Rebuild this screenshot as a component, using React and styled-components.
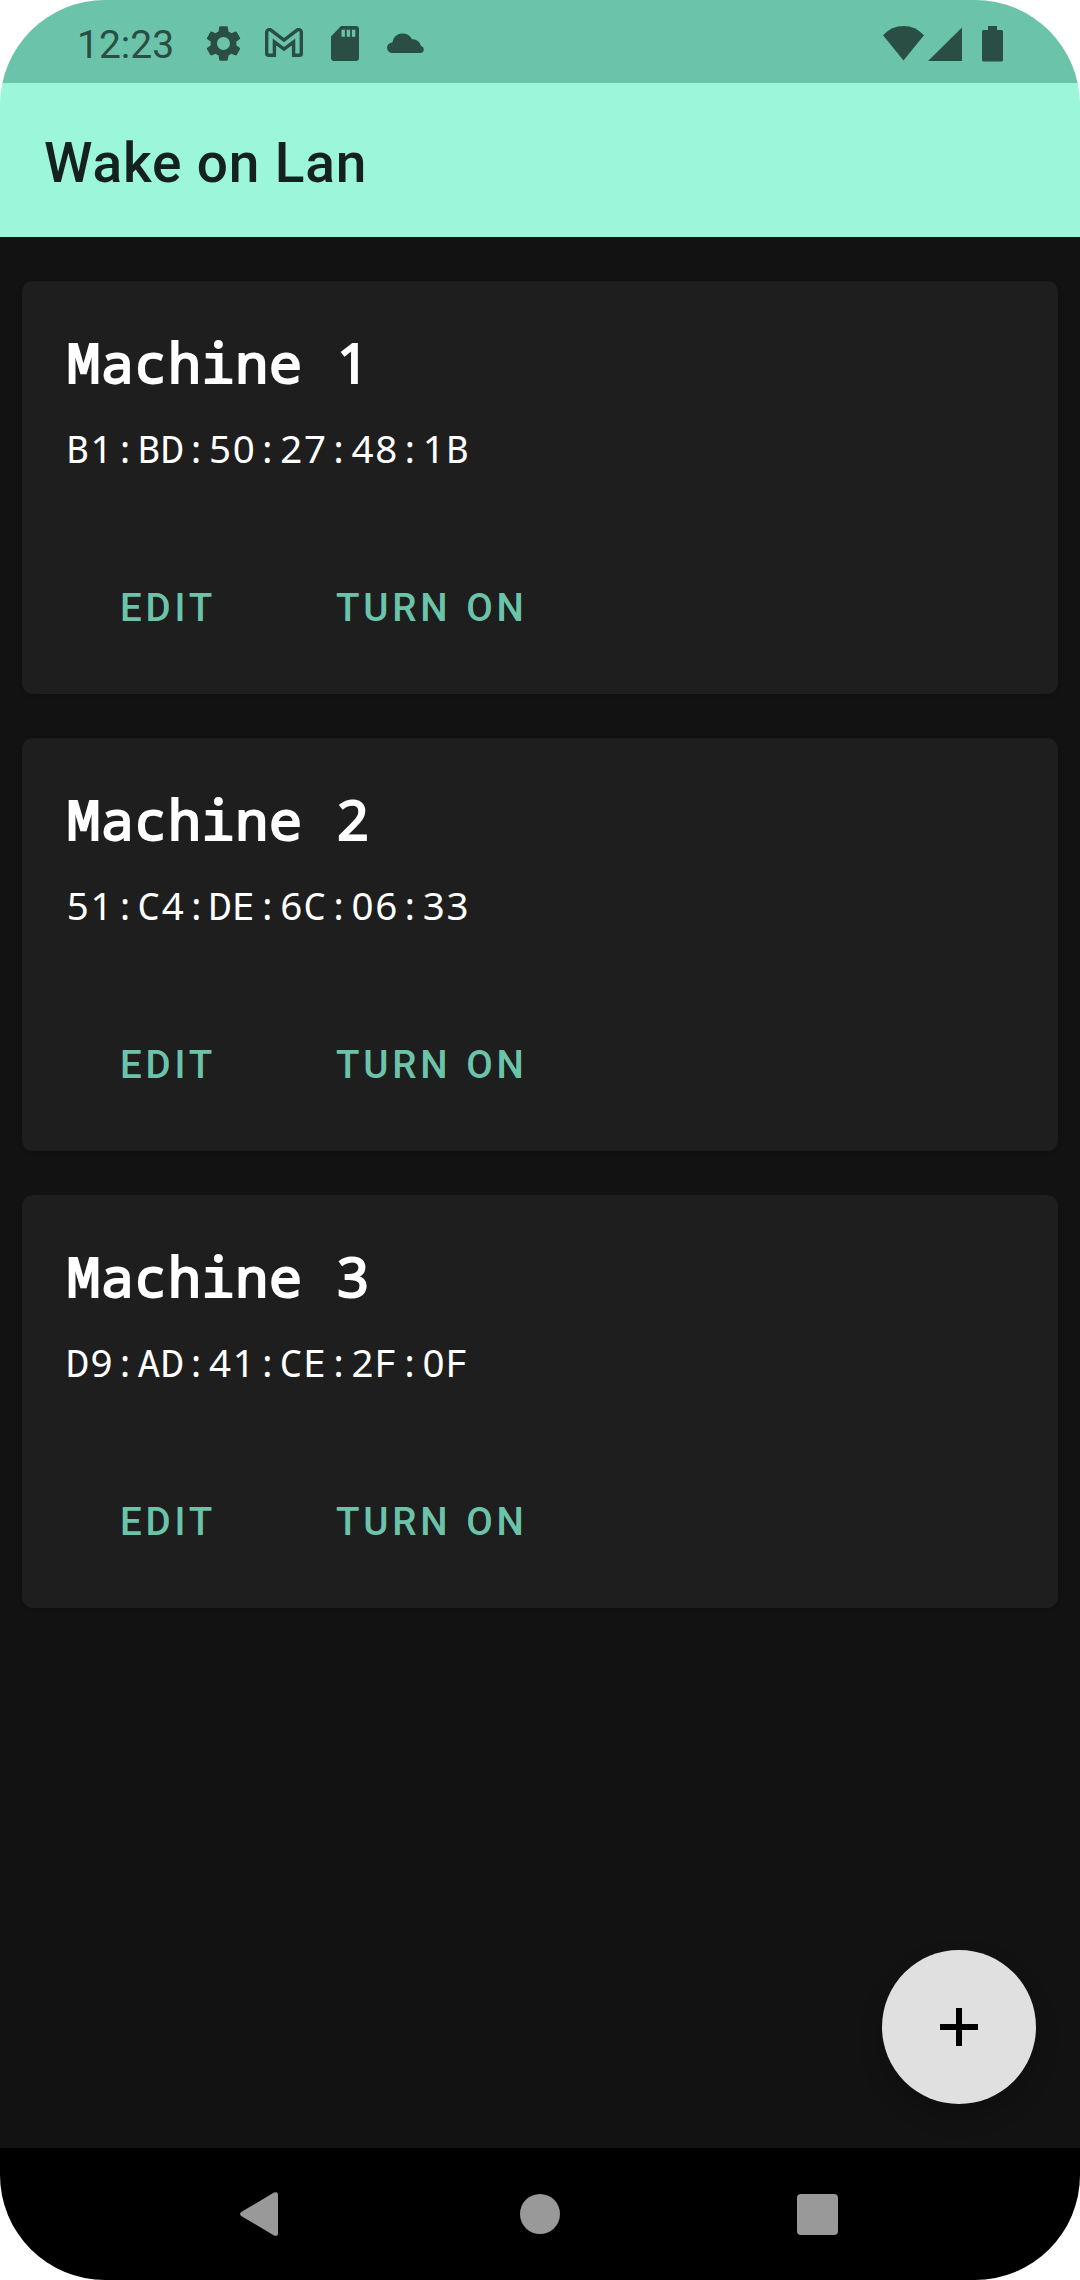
import React from "react";
import styled, { createGlobalStyle } from "styled-components";

const GlobalStyle = createGlobalStyle`
  body {
    margin: 0;
    background: #fff;
    font-family: Roboto, "Noto Sans", sans-serif;
  }
`;

const Screen = styled.div`
  width: 1080px;
  height: 2280px;
  display: flex;
  flex-direction: column;
  overflow: hidden;
  border-radius: 105px;
`;

const StatusBar = styled.header`
  height: 83px;
  flex: none;
  display: flex;
  align-items: center;
  justify-content: space-between;
  box-sizing: border-box;
  padding: 4px 77px 0 77px;
  background: #6bc4aa;
  color: #2a4e44;
`;

const StatusGroup = styled.div`
  display: flex;
  align-items: center;
  gap: ${(p) => p.$gap || 0}px;
`;

const Clock = styled.span`
  font-size: 39px;
  line-height: 46px;
  padding-top: 2px;
  margin-right: 27.5px;
`;

const Icon = styled.svg`
  display: block;
  flex: none;
  fill: currentColor;
`;

const AppBar = styled.div`
  height: 154px;
  flex: none;
  display: flex;
  align-items: center;
  box-sizing: border-box;
  padding: 6px 0 0 44px;
  background: #9bf6da;
`;

const AppTitle = styled.h1`
  margin: 0;
  font-size: 55px;
  line-height: 64px;
  font-weight: 500;
  letter-spacing: 0.85px;
  color: #15211e;
`;

const Content = styled.main`
  flex: 1;
  min-height: 0;
  position: relative;
  display: flex;
  flex-direction: column;
  gap: 44px;
  padding: 44px 22px 0;
  background: #121212;
`;

const Card = styled.article`
  height: 413px;
  box-sizing: border-box;
  padding: 44px;
  border-radius: 11px;
  background: #1e1e1e;
  box-shadow: 0 2px 4px rgba(0, 0, 0, 0.12);
  color: #fff;
`;

const MachineName = styled.h2`
  margin: 0;
  padding-left: 1px;
  font-family: "Noto Sans Mono", "DejaVu Sans Mono", monospace;
  font-size: 55px;
  line-height: 74px;
  font-weight: 400;
  letter-spacing: 0.65px;
  -webkit-text-stroke: 2px #fff;
`;

const MacAddress = styled.p`
  margin: 23px 0 0;
  font-family: "Noto Sans Mono", "DejaVu Sans Mono", monospace;
  font-size: 38.5px;
  line-height: 52px;
  letter-spacing: 0.6px;
`;

/* Plain digits, padded out to the 0.6em advance of the monospace face. */
const Digits = styled.span`
  font-family: "Noto Sans", sans-serif;
  letter-spacing: calc(0.028em + 0.65px);
  margin: 0 -0.02em 0 0.02em;
`;

const Actions = styled.div`
  display: flex;
  margin-top: 67px;
`;

const TextButton = styled.button`
  height: 132px;
  padding: 0 ${(p) => p.$right}px 0 ${(p) => p.$left}px;
  border: 0;
  background: none;
  font-family: Roboto, "Noto Sans", sans-serif;
  font-size: 38.5px;
  font-weight: 500;
  letter-spacing: 3.8px;
  word-spacing: 1.5px;
  color: #6bc4aa;
`;

const Fab = styled.button`
  position: absolute;
  right: 44px;
  bottom: 44px;
  width: 154px;
  height: 154px;
  padding: 0;
  border: 0;
  border-radius: 50%;
  display: grid;
  place-items: center;
  background: #e0e0e0;
  color: #000;
  box-shadow: 0 12px 24px rgba(0, 0, 0, 0.2);
`;

const NavBar = styled.nav`
  height: 132px;
  flex: none;
  display: flex;
  align-items: center;
  gap: 237px;
  box-sizing: border-box;
  padding-left: 240px;
  background: #000;
  color: #999;
`;

const machines = [
  { name: "Machine 1", mac: "B1:BD:50:27:48:1B" },
  { name: "Machine 2", mac: "51:C4:DE:6C:06:33" },
  { name: "Machine 3", mac: "D9:AD:41:CE:2F:0F" },
];

const MonoText = ({ children }) =>
  children
    .split(/(\d+)/)
    .filter(Boolean)
    .map((part, i) => (/^\d/.test(part) ? <Digits key={i}>{part}</Digits> : part));

const MachineCard = ({ name, mac }) => (
  <Card>
    <MachineName>
      <MonoText>{name}</MonoText>
    </MachineName>
    <MacAddress>
      <MonoText>{mac}</MonoText>
    </MacAddress>
    <Actions>
      <TextButton $left={54} $right={60}>EDIT</TextButton>
      <TextButton $left={60} $right={59}>TURN ON</TextButton>
    </Actions>
  </Card>
);

export default function App() {
  return (
    <>
      <GlobalStyle />
      <Screen>
        <StatusBar>
          <StatusGroup>
            <Clock>12:23</Clock>
            <StatusGroup $gap={28}>
              <StatusGroup $gap={20.5}>
                <Icon width="43" height="43" viewBox="0 0 24 24">
                  <path d="M19.14 12.94c.04-.3.06-.61.06-.94 0-.32-.02-.64-.07-.94l2.03-1.58a.49.49 0 0 0 .12-.61l-1.92-3.32a.488.488 0 0 0-.59-.22l-2.39.96c-.5-.38-1.03-.7-1.62-.94l-.36-2.54a.484.484 0 0 0-.48-.41h-3.84c-.24 0-.43.17-.47.41l-.36 2.54c-.59.24-1.13.57-1.62.94l-2.39-.96c-.22-.08-.47 0-.59.22L2.74 8.87c-.12.21-.08.47.12.61l2.03 1.58c-.05.3-.09.63-.09.94s.02.64.07.94l-2.03 1.58a.49.49 0 0 0-.12.61l1.92 3.32c.12.22.37.29.59.22l2.39-.96c.5.38 1.03.7 1.62.94l.36 2.54c.05.24.24.41.48.41h3.84c.24 0 .44-.17.47-.41l.36-2.54c.59-.24 1.13-.56 1.62-.94l2.39.96c.22.08.47 0 .59-.22l1.92-3.32c.12-.22.07-.47-.12-.61l-2.01-1.58zM12 15.6c-1.98 0-3.6-1.62-3.6-3.6s1.62-3.6 3.6-3.6 3.6 1.62 3.6 3.6-1.62 3.6-3.6 3.6z" />
                </Icon>
                <Icon width="38" height="31" viewBox="0 0 38 31">
                  <path
                    d="M1.700 25.500V4.600C1.700 1.600 4.500.8 6.300 2.300L19 12 31.700 2.300c1.800-1.500 4.600-.7 4.600 2.300V25.500q0 1.800-1.800 1.800H28.600V14L19 21.200 9.400 14V27.300H3.500Q1.700 27.300 1.700 25.500z"
                    fill="none"
                    stroke="currentColor"
                    strokeWidth="3.400"
                  />
                </Icon>
              </StatusGroup>
              <Icon width="28" height="35" viewBox="0 0 28 35">
                <path
                  fillRule="evenodd"
                  d="M10 0h15q3 0 3 3v29q0 3-3 3H3q-3 0-3-3V10.500zM10.500 3.700v7h3.400V3.700zM15.700 3.700v7h3.400V3.700zM20.900 3.700v7h3.400V3.700z"
                />
              </Icon>
              <Icon width="38" height="24" viewBox="0 0 38 24">
                <path d="M5.300 21A5.200 5.200 0 0 1 5.300 10.500 10.400 10.400 0 0 1 25 7.300 8.300 8.300 0 0 1 34 14 3.600 3.600 0 0 1 34 21z" />
              </Icon>
            </StatusGroup>
          </StatusGroup>
          <StatusGroup $gap={20}>
            <StatusGroup $gap={3.5}>
              <Icon width="41" height="36" viewBox="0 0 41 36">
                <path d="M0 9.300Q8.500 0 20.500 0T41 9.300L20.500 34.500z" />
              </Icon>
              <Icon width="34.500" height="34" viewBox="0 0 34.500 34">
                <path d="M0 34L34.500 0V34z" />
              </Icon>
            </StatusGroup>
            <Icon width="21" height="36" viewBox="0 0 21 36">
              <path d="M6 0h9v4h4.500Q21 4 21 5.500v28.500q0 1.500-1.500 1.500h-18Q0 35.500 0 34v-28.500Q0 4 1.500 4H6z" />
            </Icon>
          </StatusGroup>
        </StatusBar>
        <AppBar>
          <AppTitle>Wake on Lan</AppTitle>
        </AppBar>
        <Content>
          {machines.map((m) => (
            <MachineCard key={m.mac} {...m} />
          ))}
          <Fab aria-label="Add machine">
            <Icon width="38" height="38" viewBox="0 0 38 38">
              <path d="M16 0h6v16h16v6H22v16h-6V22H0v-6h16z" />
            </Icon>
          </Fab>
        </Content>
        <NavBar>
          <Icon width="43" height="44" viewBox="0 0 43 44">
            <path d="M1.200 20L34 .6Q38 -1 38 3V41Q38 45 34 43.400L1.200 24Q-1 22 1.200 20z" />
          </Icon>
          <Icon width="40" height="40" viewBox="0 0 40 40">
            <circle cx="20" cy="20" r="20" />
          </Icon>
          <Icon width="41" height="41" viewBox="0 0 41 41">
            <rect width="41" height="41" rx="4" />
          </Icon>
        </NavBar>
      </Screen>
    </>
  );
}
